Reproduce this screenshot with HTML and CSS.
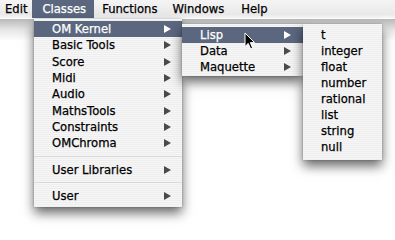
FILE: index.html
```html
<!DOCTYPE html>
<html>
<head>
<meta charset="utf-8">
<link rel="stylesheet" href="styles.css">
</head>
<body>
<div class="screen">
  <div class="menubar">
    <span class="mb-item mb-edit">Edit</span>
    <span class="mb-item mb-active">Classes</span>
    <span class="mb-item">Functions</span>
    <span class="mb-item mb-windows">Windows</span>
    <span class="mb-item">Help</span>
  </div>
  <div class="bar-shadow"></div>

  <div class="menu menu-main">
    <div class="item hl"><span>OM Kernel</span><i class="arr"></i></div>
    <div class="item"><span>Basic Tools</span><i class="arr"></i></div>
    <div class="item"><span>Score</span><i class="arr"></i></div>
    <div class="item"><span>Midi</span><i class="arr"></i></div>
    <div class="item"><span>Audio</span><i class="arr"></i></div>
    <div class="item"><span>MathsTools</span><i class="arr"></i></div>
    <div class="item"><span>Constraints</span><i class="arr"></i></div>
    <div class="item"><span>OMChroma</span><i class="arr"></i></div>
    <div class="sep"></div>
    <div class="item"><span>User Libraries</span><i class="arr"></i></div>
    <div class="sep"></div>
    <div class="item"><span>User</span><i class="arr"></i></div>
  </div>

  <div class="menu menu-sub1">
    <div class="item hl"><span>Lisp</span><i class="arr"></i></div>
    <div class="item"><span>Data</span><i class="arr"></i></div>
    <div class="item"><span>Maquette</span><i class="arr"></i></div>
  </div>

  <div class="menu menu-sub2">
    <div class="item"><span>t</span></div>
    <div class="item"><span>integer</span></div>
    <div class="item"><span>float</span></div>
    <div class="item"><span>number</span></div>
    <div class="item"><span>rational</span></div>
    <div class="item"><span>list</span></div>
    <div class="item"><span>string</span></div>
    <div class="item"><span>null</span></div>
  </div>

  <svg class="cursor" width="12" height="18" viewBox="0 0 12 18">
    <path d="M1 1 L1 14.5 L4.2 11.4 L6.6 16.8 L8.6 15.9 L6.3 10.6 L10.6 10.6 Z" fill="#000" stroke="#fff" stroke-width="1" stroke-linejoin="round"/>
  </svg>
</div>
</body>
</html>
```

FILE: styles.css
```css
html, body {
  margin: 0;
  padding: 0;
  background: #fff;
}
.screen {
  position: relative;
  width: 395px;
  height: 240px;
  overflow: hidden;
  font-family: "DejaVu Sans", "Liberation Sans", sans-serif;
  font-size: 11.6px;
  color: #000;
  -webkit-text-stroke: 0.25px #000;
}
.menubar {
  display: flex;
  height: 18px;
  align-items: stretch;
  background: linear-gradient(#f4f4f4, #e9e9e9 80%, #f7f7f7);
  border-bottom: 1px solid #fdfdfd;
}
.mb-item {
  display: flex;
  align-items: center;
  padding: 0 8px;
  margin-top: -1px;
}
.mb-edit {
  padding-left: 5px;
  padding-right: 5px;
}
.mb-active {
  background: #5a677e;
  color: #fff;
  -webkit-text-stroke: 0.25px #fff;
  margin-top: 0;
  padding: 0 8px 1px 10px;
}
.mb-windows {
  padding-left: 7px;
  padding-right: 9px;
}
.bar-shadow {
  height: 22px;
  background: linear-gradient(#b9b9b9, #e6e6e6 50%, #fff);
}
.menu {
  position: absolute;
  box-sizing: border-box;
  background: repeating-linear-gradient(#f6f6f6 0, #f6f6f6 1px, #eeeeee 1px, #eeeeee 2px);
  box-shadow: 0 6px 11px rgba(0, 0, 0, 0.6), 0 0 2px rgba(0, 0, 0, 0.25);
  display: flex;
  flex-direction: column;
}
.menu-main {
  left: 34px;
  top: 19px;
  width: 148px;
  height: 188px;
  padding: 2px 0 4px;
  z-index: 1;
}
.menu-main .item {
  height: 16.3px;
}
.menu-sub1 {
  left: 182px;
  top: 24px;
  width: 121px;
  height: 52px;
  padding: 3px 0 1px;
  z-index: 2;
}
.menu-sub2 {
  left: 303px;
  top: 24px;
  width: 79px;
  height: 136px;
  padding: 3px 0 5px;
  z-index: 3;
}
.item {
  height: 16px;
  flex: none;
  display: flex;
  align-items: center;
  justify-content: space-between;
  padding: 0 11px 0 18px;
  box-sizing: border-box;
}
.menu-sub1 .item {
  padding-right: 12px;
}
.item.hl {
  background: #5a677e;
  color: #fff;
  -webkit-text-stroke: 0.25px #fff;
}
.sep {
  flex: none;
  height: 10px;
  display: flex;
  align-items: center;
}
.sep::before {
  content: "";
  flex: 1;
  height: 1px;
  background: #d8d8d8;
}
.arr {
  width: 0;
  height: 0;
  border-top: 4px solid transparent;
  border-bottom: 4px solid transparent;
  border-left: 7px solid #4a4a4a;
}
.item.hl .arr {
  border-left-color: #fff;
}
.cursor {
  position: absolute;
  left: 244px;
  top: 32px;
  z-index: 5;
}
```
